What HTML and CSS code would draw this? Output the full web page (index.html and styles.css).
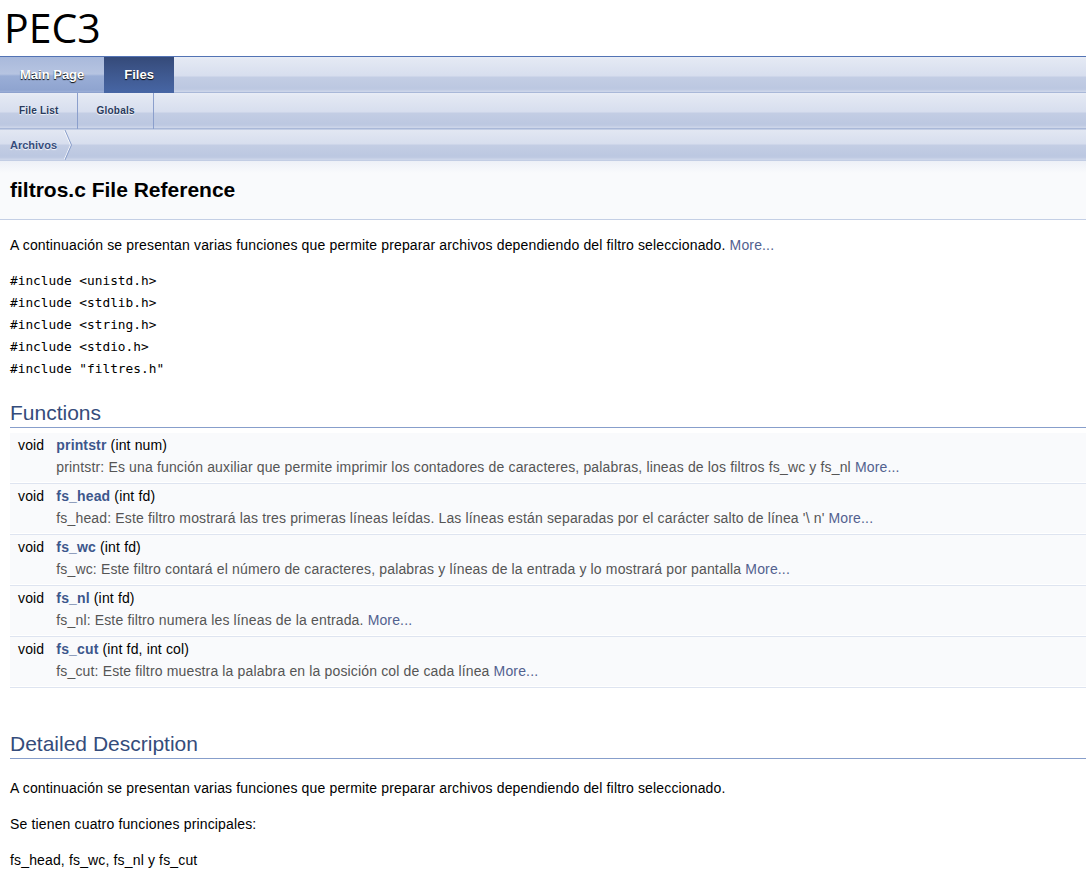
FILE: index.html
```html
<!DOCTYPE html>
<html lang="es">
<head>
<meta charset="utf-8">
<title>PEC3: filtros.c File Reference</title>
<link rel="stylesheet" href="styles.css">
</head>
<body>
<div class="titlearea"><div class="projectname">PEC3</div></div>
<nav class="tabs">
  <ul class="tablist">
    <li class="hover"><a href="#">Main Page</a></li>
    <li class="current"><a href="#">Files</a></li>
  </ul>
</nav>
<nav class="tabs tabs2">
  <ul class="tablist">
    <li><a href="#">File&nbsp;List</a></li>
    <li><a href="#">Globals</a></li>
  </ul>
</nav>
<div class="navpath">
  <ul>
    <li class="navelem"><a href="#">Archivos</a><svg class="bc" width="8" height="30" viewBox="0 0 8 30"><polyline points="0,0 6.5,15 0,30" fill="none" stroke="#ffffff" stroke-width="1" opacity="0.8"/><polyline points="1,0 7.5,15 1,30" fill="none" stroke="#8a9fcb" stroke-width="1"/></svg></li>
  </ul>
</div>
<div class="header">
  <div class="headertitle"><div class="title">filtros.c File Reference</div></div>
</div>
<div class="contents">
  <p>A continuación se presentan varias funciones que permite preparar archivos dependiendo del filtro seleccionado. <a class="more" href="#details">More...</a></p>
  <div class="includes">
    <code>#include &lt;unistd.h&gt;</code><br>
    <code>#include &lt;stdlib.h&gt;</code><br>
    <code>#include &lt;string.h&gt;</code><br>
    <code>#include &lt;stdio.h&gt;</code><br>
    <code>#include "filtres.h"</code>
  </div>
  <h2 class="groupheader funcs">Functions</h2>
  <table class="memberdecls">
    <tr><td class="memItemLeft">void&nbsp;</td><td class="memItemRight"><a class="el" href="#">printstr</a> (int num)</td></tr>
    <tr><td class="mdescLeft">&nbsp;</td><td class="mdescRight">printstr: Es una función auxiliar que permite imprimir los contadores de caracteres, palabras, lineas de los filtros fs_wc y fs_nl <a class="more" href="#">More...</a></td></tr>
    <tr><td class="memSeparator" colspan="2">&nbsp;</td></tr>
    <tr><td class="memItemLeft">void&nbsp;</td><td class="memItemRight"><a class="el" href="#">fs_head</a> (int fd)</td></tr>
    <tr><td class="mdescLeft">&nbsp;</td><td class="mdescRight">fs_head: Este filtro mostrará las tres primeras líneas leídas. Las líneas están separadas por el carácter salto de línea '\ n' <a class="more" href="#">More...</a></td></tr>
    <tr><td class="memSeparator" colspan="2">&nbsp;</td></tr>
    <tr><td class="memItemLeft">void&nbsp;</td><td class="memItemRight"><a class="el" href="#">fs_wc</a> (int fd)</td></tr>
    <tr><td class="mdescLeft">&nbsp;</td><td class="mdescRight">fs_wc: Este filtro contará el número de caracteres, palabras y líneas de la entrada y lo mostrará por pantalla <a class="more" href="#">More...</a></td></tr>
    <tr><td class="memSeparator" colspan="2">&nbsp;</td></tr>
    <tr><td class="memItemLeft">void&nbsp;</td><td class="memItemRight"><a class="el" href="#">fs_nl</a> (int fd)</td></tr>
    <tr><td class="mdescLeft">&nbsp;</td><td class="mdescRight">fs_nl: Este filtro numera les líneas de la entrada. <a class="more" href="#">More...</a></td></tr>
    <tr><td class="memSeparator" colspan="2">&nbsp;</td></tr>
    <tr><td class="memItemLeft">void&nbsp;</td><td class="memItemRight"><a class="el" href="#">fs_cut</a> (int fd, int col)</td></tr>
    <tr><td class="mdescLeft">&nbsp;</td><td class="mdescRight">fs_cut: Este filtro muestra la palabra en la posición col de cada línea <a class="more" href="#">More...</a></td></tr>
    <tr><td class="memSeparator" colspan="2">&nbsp;</td></tr>
  </table>
  <h2 class="groupheader details" id="details">Detailed Description</h2>
  <div class="textblock">
    <p>A continuación se presentan varias funciones que permite preparar archivos dependiendo del filtro seleccionado.</p>
    <p>Se tienen cuatro funciones principales:</p>
    <p>fs_head, fs_wc, fs_nl y fs_cut</p>
  </div>
</div>
</body>
</html>
```
FILE: styles.css
```css
:root {
  --tab-b: linear-gradient(to bottom, #e9edf6 0px, #e3e8f3 3px, #d7deee 19px, #c3cde4 20px, #bcc8e1 31px, #c0cbe3 33px, #ccd5e9 34px, #ccd5e9 35px, #a9b8d8 35px, #a9b8d8 36px);
  --tab-h: linear-gradient(to bottom, #a9b9db 0px, #b6c4e1 17px, #9aaed6 19px, #8fa4d0 33px, #9db0d8 35px, #8ea2ce 35px, #8ea2ce 36px);
  --tab-a: linear-gradient(to bottom, #354a79 0px, #3f5990 18px, #4766a5 36px);
}

body {
  margin: 0;
  background: #ffffff;
  color: #000000;
  font: 400 14px/22px "Liberation Sans", Arial, sans-serif;
}

a {
  color: #3d578c;
  text-decoration: none;
}

/* title area */
.titlearea {
  height: 56px;
  padding-left: 4px;
  border-bottom: 1px solid #5373b4;
}

.projectname {
  font: 400 41px/54px "Open Sans", "Noto Sans", sans-serif;
  color: #000000;
}

/* tabs */
.tabs {
  height: 36px;
  background-image: var(--tab-b);
  font: bold 13px/36px "Liberation Sans", Arial, sans-serif;
}

.tabs2 {
  font-size: 10px;
  letter-spacing: 0.2px;
}

.tablist {
  display: flex;
  margin: 0;
  padding: 0;
  list-style: none;
}

.tablist li {
  background-image: var(--tab-b);
}

.tablist a {
  display: block;
  padding: 0 20px;
  color: #283a5d;
  text-shadow: 0 1px 1px rgba(255, 255, 255, 0.9);
  white-space: nowrap;
}

.tabs2 .tablist a {
  background: linear-gradient(#8b9fcc, #8b9fcc) right top / 1px 100% no-repeat;
  padding: 0 19px;
}

.tablist li.hover a {
  background-image: var(--tab-h);
  color: #ffffff;
  text-shadow: 0 1px 1px rgba(0, 0, 0, 1);
}

.tablist li.current a {
  background-image: var(--tab-a);
  color: #ffffff;
  text-shadow: 0 1px 1px rgba(0, 0, 0, 1);
}

/* navpath */
.navpath {
  height: 30px;
  border-top: 1px solid #c2cde4;
  border-bottom: 1px solid #c2cde4;
  background-image: linear-gradient(to bottom, #e2e7f2 0px, #d7deee 14px, #c3cde4 15px, #bcc8e1 26px, #c0cbe3 28px, #ccd5e9 29px, #ccd5e9 30px);
  font: bold 11px/30px "Liberation Sans", Arial, sans-serif;
}

.navpath ul {
  display: flex;
  margin: 0;
  padding: 0;
  list-style: none;
}

.navpath li {
  display: flex;
  align-items: center;
  padding-left: 10px;
}

.navpath a {
  color: #364d7c;
  text-shadow: 0 1px 1px rgba(255, 255, 255, 0.9);
}

.navpath .bc {
  display: block;
  margin-left: 7px;
}

/* header */
.header {
  background: linear-gradient(to bottom, #edf0f7 0px, #f9fafc 12px) #f9fafc;
  border-bottom: 1px solid #c4cfe5;
}

.headertitle {
  padding: 5px 5px 5px 10px;
}

.title {
  margin: 10px 2px 10px 0;
  font: bold 21px/28px "Liberation Sans", Arial, sans-serif;
}

/* contents */
.contents {
  padding-left: 10px;
}

.contents p,
.memberdecls {
  letter-spacing: 0.15px;
}

.contents p {
  margin: 14px 0;
}

.includes {
  font: 400 12.8px/22px "DejaVu Sans Mono", monospace;
}

.includes code {
  font: inherit;
}

.groupheader {
  margin: 20px 0 0;
  padding: 0 0 2px;
  border-bottom: 1px solid #879ecb;
  color: #354c7b;
  font: 400 21px/25px "Liberation Sans", Arial, sans-serif;
}

.groupheader.details {
  margin: 43px 0 18px;
}

.memberdecls {
  width: 100%;
  margin-top: 5px;
  border-spacing: 0;
  border-collapse: separate;
}

.memItemLeft,
.memItemRight {
  background-color: #f9fafc;
  padding: 1px 0 0 8px;
  vertical-align: top;
}

.memItemLeft {
  white-space: nowrap;
  text-align: right;
}

.memItemRight {
  width: 100%;
}

.mdescLeft,
.mdescRight {
  background-color: #f9fafc;
  padding: 0 8px 4px 8px;
  color: #555555;
}

.memSeparator {
  padding: 0;
  line-height: 1px;
  border-bottom: 1px solid #dee4f0;
}

a.el {
  font-weight: bold;
}

a.more {
  color: #52618f;
}
```
